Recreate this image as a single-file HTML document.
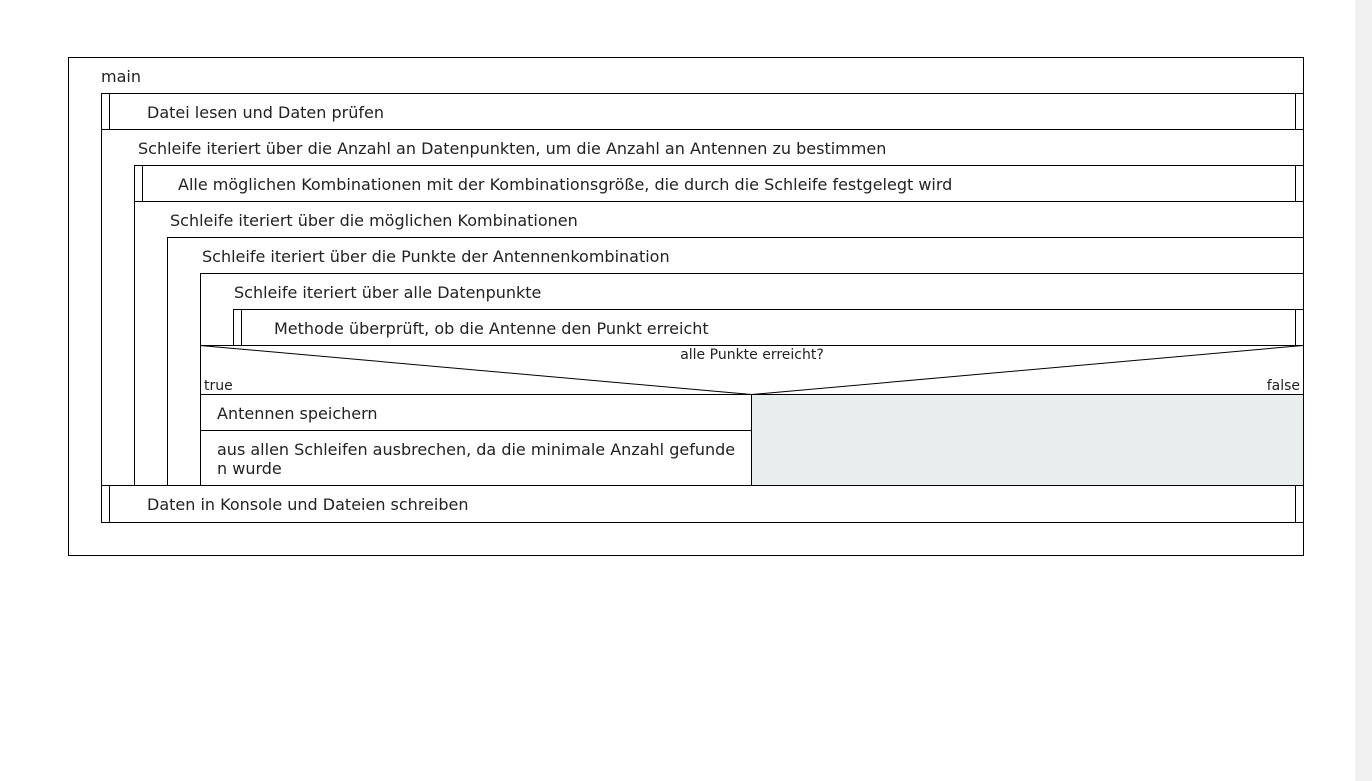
<!DOCTYPE html>
<html><head><meta charset="utf-8"><style>
html,body{margin:0;padding:0;background:#fff;width:1372px;height:781px;overflow:hidden}
.sb{position:absolute;left:1355px;top:0;width:17px;height:781px;background:#f1f1f1}
svg{position:absolute;left:0;top:0}
text{font-family:"DejaVu Sans","Liberation Sans",sans-serif;font-size:16px;fill:#222}
.s{font-size:14px}
</style></head><body>
<svg width="1372" height="781" viewBox="0 0 1372 781">
<rect x="752" y="395" width="551" height="90" fill="#e9eded"/>
<g stroke="#000" stroke-width="1" fill="none" shape-rendering="crispEdges">
<rect x="68.5" y="57.5" width="1235" height="498"/>
<line x1="101.5" y1="93" x2="101.5" y2="522"/>
<line x1="101" y1="93.5" x2="1303" y2="93.5"/>
<line x1="109.5" y1="93" x2="109.5" y2="129"/>
<line x1="1295.5" y1="93" x2="1295.5" y2="129"/>
<line x1="101" y1="129.5" x2="1303" y2="129.5"/>
<line x1="134" y1="165.5" x2="1303" y2="165.5"/>
<line x1="134.5" y1="165" x2="134.5" y2="485"/>
<line x1="142.5" y1="165" x2="142.5" y2="201"/>
<line x1="1295.5" y1="165" x2="1295.5" y2="201"/>
<line x1="134" y1="201.5" x2="1303" y2="201.5"/>
<line x1="167" y1="237.5" x2="1303" y2="237.5"/>
<line x1="167.5" y1="237" x2="167.5" y2="485"/>
<line x1="200" y1="273.5" x2="1303" y2="273.5"/>
<line x1="200.5" y1="273" x2="200.5" y2="485"/>
<line x1="233" y1="309.5" x2="1303" y2="309.5"/>
<line x1="233.5" y1="309" x2="233.5" y2="345"/>
<line x1="241.5" y1="309" x2="241.5" y2="345"/>
<line x1="1295.5" y1="309" x2="1295.5" y2="345"/>
<line x1="200" y1="345.5" x2="1303" y2="345.5"/>
<line x1="200" y1="394.5" x2="1303" y2="394.5"/>
<line x1="751.5" y1="394" x2="751.5" y2="485"/>
<line x1="200" y1="430.5" x2="751" y2="430.5"/>
<line x1="101" y1="485.5" x2="1303" y2="485.5"/>
<line x1="109.5" y1="485" x2="109.5" y2="522"/>
<line x1="1295.5" y1="485" x2="1295.5" y2="522"/>
<line x1="101" y1="522.5" x2="1303" y2="522.5"/>
</g>
<g stroke="#000" stroke-width="1">
<line x1="200" y1="345.5" x2="751.5" y2="394.5"/>
<line x1="1303" y1="345.5" x2="751.5" y2="394.5"/>
</g>
<text x="101" y="82">main</text>
<text x="147" y="118">Datei lesen und Daten prüfen</text>
<text x="138" y="154">Schleife iteriert über die Anzahl an Datenpunkten, um die Anzahl an Antennen zu bestimmen</text>
<text x="178" y="190">Alle möglichen Kombinationen mit der Kombinationsgröße, die durch die Schleife festgelegt wird</text>
<text x="170" y="226">Schleife iteriert über die möglichen Kombinationen</text>
<text x="202" y="262">Schleife iteriert über die Punkte der Antennenkombination</text>
<text x="234" y="298">Schleife iteriert über alle Datenpunkte</text>
<text x="274" y="334">Methode überprüft, ob die Antenne den Punkt erreicht</text>
<text class="s" x="752" y="359" text-anchor="middle">alle Punkte erreicht?</text>
<text class="s" x="204" y="390">true</text>
<text class="s" x="1300" y="390" text-anchor="end">false</text>
<text x="217" y="419">Antennen speichern</text>
<text x="217" y="455">aus allen Schleifen ausbrechen, da die minimale Anzahl gefunde</text>
<text x="217" y="474">n wurde</text>
<text x="147" y="510">Daten in Konsole und Dateien schreiben</text>
</svg>
<div class="sb"></div>
</body></html>
